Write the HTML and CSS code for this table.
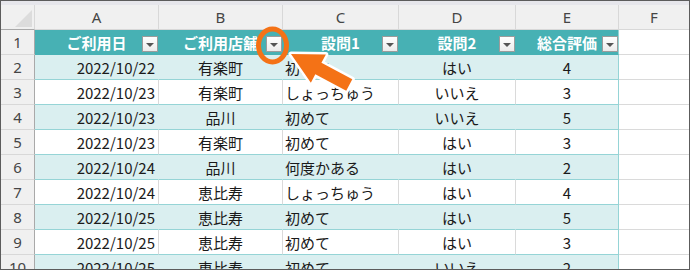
FILE: index.html
```html
<!DOCTYPE html>
<html lang="ja">
<head>
<meta charset="utf-8">
<link rel="stylesheet" href="styles.css">
</head>
<body>
<div class="frame">
  <div class="topband"></div>
  <div class="sheet">
    <div class="corner"><span class="tri"></span></div>
    <div class="ch">A</div><div class="ch">B</div><div class="ch">C</div><div class="ch">D</div><div class="ch">E</div><div class="ch chf">F</div>

    <div class="rh">1</div>
    <div class="th">ご利用日<span class="dd"></span></div>
    <div class="th">ご利用店舗<span class="dd"></span></div>
    <div class="th">設問1<span class="dd"></span></div>
    <div class="th">設問2<span class="dd"></span></div>
    <div class="th last">総合評価<span class="dd"></span></div>
    <div class="fc"></div>

    <div class="rh">2</div>
    <div class="td band r">2022/10/22</div><div class="td band c">有楽町</div><div class="td band l">初めて</div><div class="td band c">はい</div><div class="td band c last">4</div><div class="fc"></div>

    <div class="rh">3</div>
    <div class="td r">2022/10/23</div><div class="td c">有楽町</div><div class="td l">しょっちゅう</div><div class="td c">いいえ</div><div class="td c last">3</div><div class="fc"></div>

    <div class="rh">4</div>
    <div class="td band r">2022/10/23</div><div class="td band c">品川</div><div class="td band l">初めて</div><div class="td band c">いいえ</div><div class="td band c last">5</div><div class="fc"></div>

    <div class="rh">5</div>
    <div class="td r">2022/10/23</div><div class="td c">有楽町</div><div class="td l">初めて</div><div class="td c">はい</div><div class="td c last">3</div><div class="fc"></div>

    <div class="rh">6</div>
    <div class="td band r">2022/10/24</div><div class="td band c">品川</div><div class="td band l">何度かある</div><div class="td band c">はい</div><div class="td band c last">2</div><div class="fc"></div>

    <div class="rh">7</div>
    <div class="td r">2022/10/24</div><div class="td c">恵比寿</div><div class="td l">しょっちゅう</div><div class="td c">はい</div><div class="td c last">4</div><div class="fc"></div>

    <div class="rh">8</div>
    <div class="td band r">2022/10/25</div><div class="td band c">恵比寿</div><div class="td band l">初めて</div><div class="td band c">はい</div><div class="td band c last">5</div><div class="fc"></div>

    <div class="rh">9</div>
    <div class="td r">2022/10/25</div><div class="td c">恵比寿</div><div class="td l">初めて</div><div class="td c">はい</div><div class="td c last">3</div><div class="fc"></div>

    <div class="rh">10</div>
    <div class="td band r">2022/10/25</div><div class="td band c">恵比寿</div><div class="td band l">初めて</div><div class="td band c">いいえ</div><div class="td band c last">2</div><div class="fc"></div>
  </div>

  <svg class="overlay" width="690" height="270" viewBox="0 0 690 270">
    <ellipse cx="272.5" cy="45.5" rx="14" ry="16.5" fill="none" stroke="#f47216" stroke-width="5"/>
    <polygon points="0,0 31,-16 31,-6.5 66,-6.5 66,6.5 31,6.5 31,16" fill="#f47216" stroke="#ffffff" stroke-width="5" stroke-linejoin="round" paint-order="stroke" transform="translate(291 54) rotate(28)"/>
  </svg>
</div>
</body>
</html>
```

FILE: styles.css
```css
html, body {
  margin: 0;
  padding: 0;
  background: #ffffff;
}

.frame {
  position: relative;
  width: 690px;
  height: 270px;
  box-sizing: border-box;
  border: 1px solid #5c5c5c;
  overflow: hidden;
  background: #ffffff;
  font-family: "Noto Sans CJK JP", "Noto Sans", sans-serif;
}

.topband {
  height: 4px;
  background: #e6e6eb;
}

.sheet {
  display: grid;
  grid-template-columns: 34px 124px 124px 116px 117px 103px 1fr;
  grid-auto-rows: 25px;
}

.sheet > div {
  box-sizing: border-box;
  display: flex;
  align-items: center;
  font-size: 15px;
  line-height: 1;
  white-space: nowrap;
}

.corner {
  position: relative;
  background: #f0f0f0;
  border-right: 1px solid #d8d8d8;
  border-bottom: 1px solid #a9a9a9;
}

.tri {
  position: absolute;
  right: 2px;
  bottom: 2px;
  width: 0;
  height: 0;
  border-left: 17px solid transparent;
  border-bottom: 17px solid #dcdcdc;
}

.ch {
  background: #f0f0f0;
  border-right: 1px solid #d8d8d8;
  border-bottom: 1px solid #d8d8d8;
  justify-content: center;
  color: #454545;
  font-family: "Noto Sans", "Noto Sans CJK JP", sans-serif;
  font-size: 15px;
}

.chf {
  border-right: none;
}

.rh {
  background: #f0f0f0;
  border-right: 1px solid #a9a9a9;
  border-bottom: 1px solid #d8d8d8;
  justify-content: center;
  color: #454545;
  font-family: "Noto Sans", "Noto Sans CJK JP", sans-serif;
}

.th {
  position: relative;
  background: #47b1b4;
  color: #ffffff;
  font-weight: bold;
  justify-content: center;
  border-right: 1px solid #47b1b4;
  border-bottom: 1px solid #47b1b4;
}

.th.last {
  border-right-color: #95d4d6;
}

.dd {
  position: absolute;
  right: 0;
  bottom: 2px;
  width: 16px;
  height: 16px;
  box-sizing: border-box;
  border: 1px solid #9c9c9c;
  background: linear-gradient(#ffffff, #ececec);
}

.dd::after {
  content: "";
  position: absolute;
  left: 3px;
  top: 6px;
  width: 0;
  height: 0;
  border-left: 4px solid transparent;
  border-right: 4px solid transparent;
  border-top: 4px solid #555555;
}

.td {
  background: #ffffff;
  color: #1a1a1a;
  border-right: 1px solid #dadada;
  border-bottom: 1px solid #95d4d6;
}

.td.band {
  background: #daeff0;
  border-right-color: #daeff0;
}

.td.last {
  border-right-color: #95d4d6;
}

.r {
  justify-content: flex-end;
  padding-right: 3px;
}

.c {
  justify-content: center;
}

.l {
  justify-content: flex-start;
  padding-left: 2px;
}

.fc {
  background: #ffffff;
  border-bottom: 1px solid #dadada;
}

.overlay {
  position: absolute;
  left: -1px;
  top: -1px;
  pointer-events: none;
}
```
